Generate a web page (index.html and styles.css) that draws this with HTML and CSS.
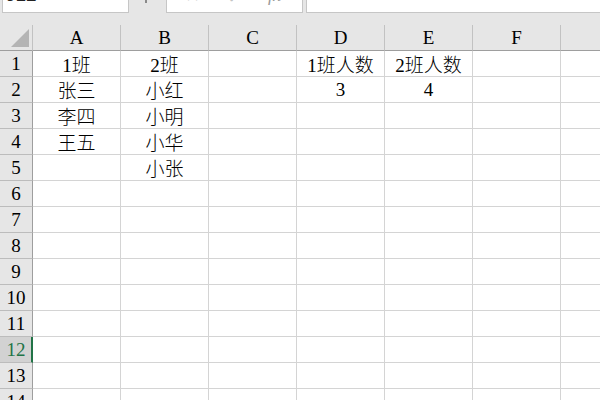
FILE: index.html
```html
<!DOCTYPE html>
<html>
<head>
<meta charset="utf-8">
<link rel="stylesheet" href="styles.css">
</head>
<body>
<div class="app">
  <div class="toolbar">
    <div class="namebox"><span>J12</span></div>
    <div class="dots"></div>
    <div class="fbtns">
      <span class="ic ic-x">✕</span>
      <span class="ic ic-ok">✓</span>
      <span class="ic ic-fx">fx</span>
    </div>
    <div class="finput"></div>
  </div>
  <div class="gap"></div>
  <div class="sheet">
    <div class="hd corner"><span class="tri"></span></div>
    <div class="hd col">A</div><div class="hd col">B</div><div class="hd col">C</div><div class="hd col">D</div><div class="hd col">E</div><div class="hd col">F</div><div class="hd col"></div>

    <div class="rh">1</div><div class="c">1班</div><div class="c">2班</div><div class="c"></div><div class="c">1班人数</div><div class="c">2班人数</div><div class="c"></div><div class="c"></div>
    <div class="rh">2</div><div class="c">张三</div><div class="c">小红</div><div class="c"></div><div class="c">3</div><div class="c">4</div><div class="c"></div><div class="c"></div>
    <div class="rh">3</div><div class="c">李四</div><div class="c">小明</div><div class="c"></div><div class="c"></div><div class="c"></div><div class="c"></div><div class="c"></div>
    <div class="rh">4</div><div class="c">王五</div><div class="c">小华</div><div class="c"></div><div class="c"></div><div class="c"></div><div class="c"></div><div class="c"></div>
    <div class="rh">5</div><div class="c"></div><div class="c">小张</div><div class="c"></div><div class="c"></div><div class="c"></div><div class="c"></div><div class="c"></div>
    <div class="rh">6</div><div class="c"></div><div class="c"></div><div class="c"></div><div class="c"></div><div class="c"></div><div class="c"></div><div class="c"></div>
    <div class="rh">7</div><div class="c"></div><div class="c"></div><div class="c"></div><div class="c"></div><div class="c"></div><div class="c"></div><div class="c"></div>
    <div class="rh">8</div><div class="c"></div><div class="c"></div><div class="c"></div><div class="c"></div><div class="c"></div><div class="c"></div><div class="c"></div>
    <div class="rh">9</div><div class="c"></div><div class="c"></div><div class="c"></div><div class="c"></div><div class="c"></div><div class="c"></div><div class="c"></div>
    <div class="rh">10</div><div class="c"></div><div class="c"></div><div class="c"></div><div class="c"></div><div class="c"></div><div class="c"></div><div class="c"></div>
    <div class="rh">11</div><div class="c"></div><div class="c"></div><div class="c"></div><div class="c"></div><div class="c"></div><div class="c"></div><div class="c"></div>
    <div class="rh sel">12</div><div class="c"></div><div class="c"></div><div class="c"></div><div class="c"></div><div class="c"></div><div class="c"></div><div class="c"></div>
    <div class="rh">13</div><div class="c"></div><div class="c"></div><div class="c"></div><div class="c"></div><div class="c"></div><div class="c"></div><div class="c"></div>
    <div class="rh">14</div><div class="c"></div><div class="c"></div><div class="c"></div><div class="c"></div><div class="c"></div><div class="c"></div><div class="c"></div>
  </div>
</div>
</body>
</html>
```

FILE: styles.css
```css
html, body {
  margin: 0;
  padding: 0;
  background: #e6e6e6;
  overflow: hidden;
}
.app {
  width: 600px;
  height: 400px;
  overflow: hidden;
  background: #e6e6e6;
  font-family: "Liberation Serif", "Noto Sans CJK SC", serif;
  color: #000;
}
.toolbar {
  display: flex;
  align-items: flex-end;
  height: 13px;
  overflow: hidden;
}
.namebox {
  box-sizing: border-box;
  margin-left: 2px;
  width: 127px;
  height: 30px;
  background: #fff;
  border: 1px solid #c6c6c6;
  font-family: "Liberation Sans", sans-serif;
  font-size: 19px;
  color: #222;
  padding-left: 3px;
  display: flex;
  align-items: flex-end;
  padding-bottom: 8px;
  line-height: 1;
}
.dots {
  width: 2px;
  height: 30px;
  margin-left: 16px;
  margin-bottom: 10px;
  background: #8a8a8a;
}
.fbtns {
  box-sizing: border-box;
  margin-left: 19px;
  width: 137px;
  height: 30px;
  background: #fff;
  border: 1px solid #c6c6c6;
  position: relative;
  color: #c4c4c4;
}
.ic {
  position: absolute;
  bottom: 7px;
  line-height: 1;
}
.ic-x { left: 18px; font-size: 18px; font-family: "DejaVu Sans", sans-serif; }
.ic-ok { left: 60px; font-size: 18px; font-family: "DejaVu Sans", sans-serif; bottom: 6px; }
.ic-fx { left: 101px; font-size: 18px; font-style: italic; font-family: "Liberation Serif", serif; color: #9a9a9a; bottom: 8px; }
.finput {
  box-sizing: border-box;
  margin-left: 3px;
  flex: 1;
  height: 30px;
  background: #fff;
  border: 1px solid #c6c6c6;
  border-right: none;
}
.gap {
  height: 12px;
}
.sheet {
  display: grid;
  grid-template-columns: 33px repeat(7, 88px);
  grid-auto-rows: 26px;
  background: #fff;
  font-size: 19px;
}
.hd {
  box-sizing: border-box;
  background: #e6e6e6;
  border-bottom: 1px solid #9e9e9e;
  border-right: 1px solid #c2c2c2;
  display: flex;
  align-items: center;
  justify-content: center;
  padding-top: 1px;
}
.corner {
  border-right: 1px solid #c2c2c2;
  position: relative;
}
.tri {
  position: absolute;
  left: 11px;
  top: 4px;
  width: 0;
  height: 0;
  border-left: 18px solid transparent;
  border-bottom: 18px solid #b4b4b4;
}
.rh {
  box-sizing: border-box;
  background: #e6e6e6;
  border-right: 1px solid #9e9e9e;
  border-bottom: 1px solid #bcbcbc;
  display: flex;
  align-items: center;
  justify-content: center;
  padding-top: 1px;
}
.rh.sel {
  background: #d2d2d2;
  color: #217346;
  border-right: 2px solid #217346;
  padding-left: 1px;
}
.c {
  box-sizing: border-box;
  background: #fff;
  border-right: 1px solid #d4d4d4;
  border-bottom: 1px solid #d4d4d4;
  display: flex;
  align-items: center;
  justify-content: center;
  white-space: nowrap;
  overflow: hidden;
  font-weight: 300;
}
```
